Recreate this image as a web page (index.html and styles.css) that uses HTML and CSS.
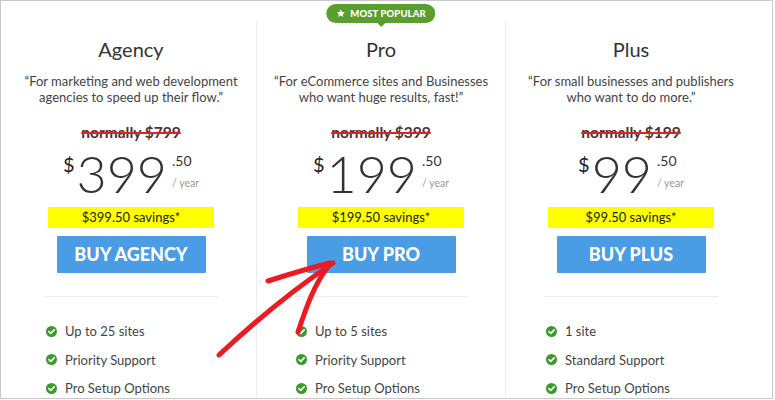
FILE: index.html
```html
<!DOCTYPE html>
<html>
<head>
<meta charset="utf-8">
<link rel="stylesheet" href="styles.css">
</head>
<body>
<div class="frame">
  <div class="plans">
    <div class="plan">
      <h2 class="title">Agency</h2>
      <p class="desc">“For marketing and web development agencies to speed up their flow.”</p>
      <div class="old">normally $799</div>
      <div class="price"><span class="cur">$</span><span class="amt">399</span><span class="frac"><span class="cents">.50</span><span class="per">/ year</span></span></div>
      <div class="save">$399.50 savings*</div>
      <a class="buy">BUY AGENCY</a>
      <hr class="rule">
      <ul class="feats">
        <li><svg class="chk" viewBox="0 0 12 12"><circle cx="6" cy="6" r="6"/><path d="M3.2 6.2 5.2 8.1 8.9 4.2"/></svg>Up to 25 sites</li>
        <li><svg class="chk" viewBox="0 0 12 12"><circle cx="6" cy="6" r="6"/><path d="M3.2 6.2 5.2 8.1 8.9 4.2"/></svg>Priority Support</li>
        <li><svg class="chk" viewBox="0 0 12 12"><circle cx="6" cy="6" r="6"/><path d="M3.2 6.2 5.2 8.1 8.9 4.2"/></svg>Pro Setup Options</li>
      </ul>
    </div>
    <div class="plan featured">
      <div class="badge"><svg class="star" viewBox="0 0 10 10"><path d="M5 0.4 6.35 3.3 9.5 3.650 7.15 5.8 7.8 8.95 5 7.35 2.2 8.95 2.85 5.8 0.5 3.65 3.65 3.3Z"/></svg>MOST POPULAR</div>
      <h2 class="title">Pro</h2>
      <p class="desc">“For eCommerce sites and Businesses who want huge results, fast!”</p>
      <div class="old">normally $399</div>
      <div class="price"><span class="cur">$</span><span class="amt">199</span><span class="frac"><span class="cents">.50</span><span class="per">/ year</span></span></div>
      <div class="save">$199.50 savings*</div>
      <a class="buy">BUY PRO</a>
      <hr class="rule">
      <ul class="feats">
        <li><svg class="chk" viewBox="0 0 12 12"><circle cx="6" cy="6" r="6"/><path d="M3.2 6.2 5.2 8.1 8.9 4.2"/></svg>Up to 5 sites</li>
        <li><svg class="chk" viewBox="0 0 12 12"><circle cx="6" cy="6" r="6"/><path d="M3.2 6.2 5.2 8.1 8.9 4.2"/></svg>Priority Support</li>
        <li><svg class="chk" viewBox="0 0 12 12"><circle cx="6" cy="6" r="6"/><path d="M3.2 6.2 5.2 8.1 8.9 4.2"/></svg>Pro Setup Options</li>
      </ul>
    </div>
    <div class="plan">
      <h2 class="title">Plus</h2>
      <p class="desc">“For small businesses and publishers who want to do more.”</p>
      <div class="old">normally $199</div>
      <div class="price"><span class="cur">$</span><span class="amt">99</span><span class="frac"><span class="cents">.50</span><span class="per">/ year</span></span></div>
      <div class="save">$99.50 savings*</div>
      <a class="buy">BUY PLUS</a>
      <hr class="rule">
      <ul class="feats">
        <li><svg class="chk" viewBox="0 0 12 12"><circle cx="6" cy="6" r="6"/><path d="M3.2 6.2 5.2 8.1 8.9 4.2"/></svg>1 site</li>
        <li><svg class="chk" viewBox="0 0 12 12"><circle cx="6" cy="6" r="6"/><path d="M3.2 6.2 5.2 8.1 8.9 4.2"/></svg>Standard Support</li>
        <li><svg class="chk" viewBox="0 0 12 12"><circle cx="6" cy="6" r="6"/><path d="M3.2 6.2 5.2 8.1 8.9 4.2"/></svg>Pro Setup Options</li>
      </ul>
    </div>
  </div>
  <svg class="arrow" viewBox="0 0 773 399">
    <path d="M219 355 C250 326 290 292 333 263"/>
    <path d="M268 281 C290 274 310 268 330 263"/>
    <path d="M298 332 C306 308 314 284 330 264"/>
  </svg>
</div>
</body>
</html>
```

FILE: styles.css
```css
html, body {
  margin: 0;
  padding: 0;
  background: #fff;
}
body {
  font-family: Lato, "Open Sans", sans-serif;
  color: #333;
}
.frame {
  position: relative;
  width: 773px;
  height: 399px;
  box-sizing: border-box;
  border: 1px solid #c8c8c8;
  overflow: hidden;
  background: #fff;
}
.plans {
  display: grid;
  grid-template-columns: 250px 250px 250px;
  padding-left: 5px;
  padding-top: 20px;
}
.plan {
  position: relative;
  display: flex;
  flex-direction: column;
  align-items: center;
  padding-top: 15px;
  box-sizing: border-box;
  height: 420px;
}
.featured {
  border-left: 1px solid #ececec;
  border-right: 1px solid #ececec;
}
.badge {
  position: absolute;
  top: -17px;
  left: 50%;
  transform: translateX(-50%);
  display: flex;
  align-items: center;
  gap: 5px;
  height: 19px;
  padding: 0 10px 0 10px;
  border-radius: 10px;
  background: #5a9f2e;
  color: #fff;
  font-weight: 900;
  font-size: 9.5px;
  letter-spacing: 0.1px;
  white-space: nowrap;
}
.badge::after {
  content: "";
  position: absolute;
  left: 50%;
  bottom: -4px;
  margin-left: -4px;
  border-left: 4px solid transparent;
  border-right: 4px solid transparent;
  border-top: 4px solid #5a9f2e;
}
.star {
  width: 9px;
  height: 9px;
  fill: #fff;
}
.title {
  margin: 0;
  font-size: 20px;
  line-height: 26px;
  font-weight: 400;
  color: #333;
}
.desc {
  margin: 11px 0 0;
  width: 220px;
  text-align: center;
  font-size: 13px;
  line-height: 16px;
  color: #444;
}
.old {
  margin-top: 18px;
  font-size: 15.5px;
  line-height: 18px;
  font-weight: 700;
  color: #4a3434;
  text-decoration: line-through;
  text-decoration-color: #d4262b;
  text-decoration-thickness: 1.5px;
}
.price {
  display: flex;
  align-items: flex-start;
  margin-top: 6px;
  height: 52px;
}
.cur {
  font-size: 20px;
  line-height: 20px;
  margin-top: 7px;
  color: #222;
}
.amt {
  font-size: 52px;
  line-height: 52px;
  font-weight: 300;
  color: #333;
  margin: 0 5px 0 2px;
}
.frac {
  display: flex;
  flex-direction: column;
  margin-top: 7px;
}
.cents {
  font-size: 14px;
  line-height: 14px;
  color: #333;
}
.per {
  font-size: 10.5px;
  line-height: 12px;
  margin-top: 9px;
  color: #999;
}
.save {
  margin-top: 8px;
  width: 166px;
  height: 21px;
  line-height: 21px;
  background: #ffff00;
  text-align: center;
  font-size: 13px;
  color: #222;
}
.buy {
  margin-top: 8px;
  width: 149px;
  height: 37px;
  line-height: 37px;
  background: #4a9ce4;
  border-radius: 1px;
  color: #fff;
  text-align: center;
  font-weight: 900;
  font-size: 18px;
}
.rule {
  margin: 23px 0 0;
  width: 174px;
  border: none;
  border-top: 1px solid #ececec;
}
.feats {
  list-style: none;
  margin: 20px 0 0;
  padding: 0;
  width: 170px;
}
.feats li {
  display: flex;
  align-items: center;
  height: 28.5px;
  font-size: 13px;
  color: #444;
}
.chk {
  width: 11px;
  height: 11px;
  margin-right: 8px;
  flex: none;
}
.chk circle {
  fill: #3a9a2b;
}
.chk path {
  fill: none;
  stroke: #fff;
  stroke-width: 1.8;
  stroke-linecap: round;
  stroke-linejoin: round;
}
.arrow {
  position: absolute;
  left: -1px;
  top: -1px;
  width: 773px;
  height: 399px;
  pointer-events: none;
}
.arrow path {
  fill: none;
  stroke: #ec1b23;
  stroke-width: 5;
  stroke-linecap: round;
}
```
